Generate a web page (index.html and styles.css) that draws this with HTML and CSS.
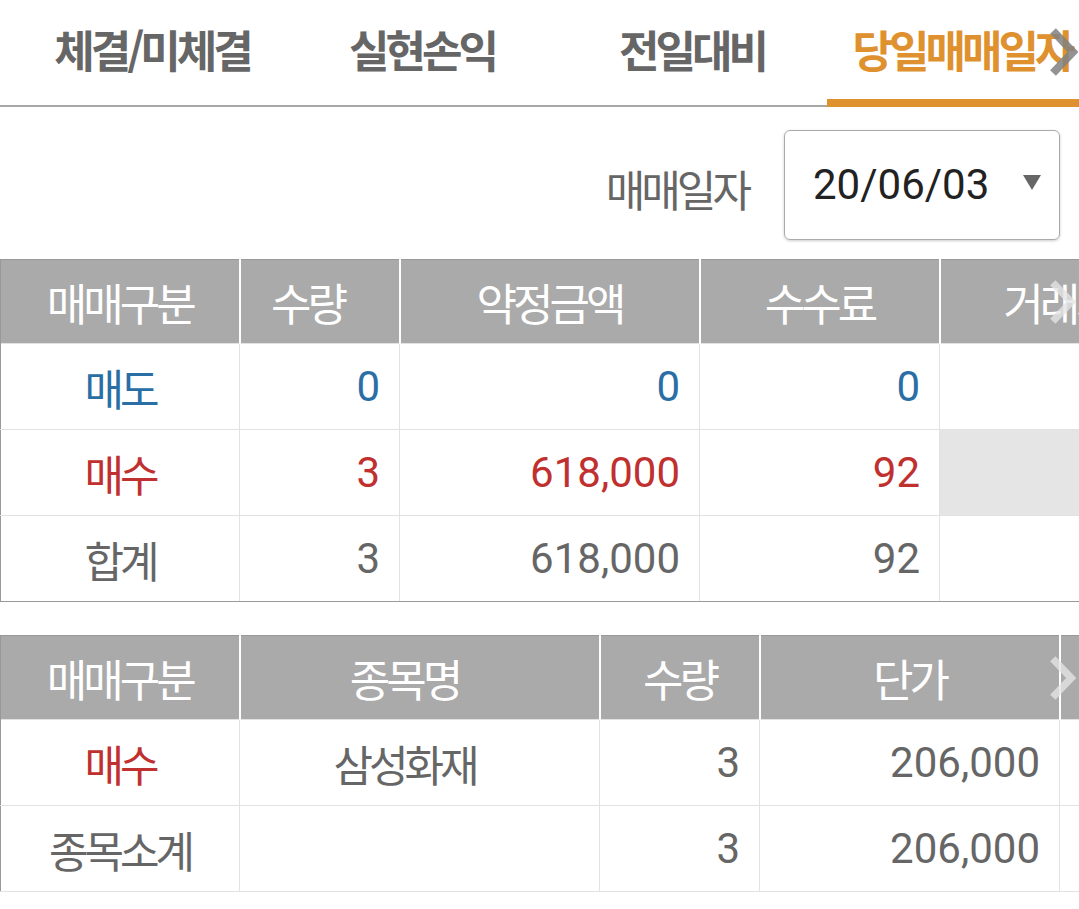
FILE: index.html
```html
<!DOCTYPE html>
<html lang="ko">

<head>
    <meta charset="UTF-8" />
    <title>당일매매일지</title>
    <link rel="stylesheet" href="styles.css">
</head>

<body>
    <!-- 상단 탭 -->
    <div class="tab-bar">
        <ul class="tabs">
            <li class="tab">체결/미체결</li>
            <li class="tab">실현손익</li>
            <li class="tab">전일대비</li>
            <li class="tab active">당일매매일자</li>
        </ul>
        <svg class="more more-tab" viewBox="0 0 30 50" width="30" height="50">
            <path d="M5 4 L25 25 L5 46" />
        </svg>
    </div>

    <!-- 매매일자 선택 -->
    <div class="date-row">
        <span class="date-label">매매일자</span>
        <div class="select">
            <span class="select-value">20/06/03</span>
            <span class="select-arrow"></span>
        </div>
    </div>

    <!-- 매매구분 합계 -->
    <div class="grid-wrap">
        <table class="grid grid-sum">
            <colgroup>
                <col style="width: 239px">
                <col style="width: 160px">
                <col style="width: 300px">
                <col style="width: 240px">
                <col style="width: 236px">
            </colgroup>
            <thead>
                <tr>
                    <th>매매구분</th>
                    <th class="shift">수량</th>
                    <th>약정금액</th>
                    <th>수수료</th>
                    <th>거래세</th>
                </tr>
            </thead>
            <tbody>
                <tr class="sell">
                    <td class="kind">매도</td>
                    <td class="num">0</td>
                    <td class="num">0</td>
                    <td class="num">0</td>
                    <td class="num"></td>
                </tr>
                <tr class="buy">
                    <td class="kind">매수</td>
                    <td class="num">3</td>
                    <td class="num">618,000</td>
                    <td class="num">92</td>
                    <td class="num on"></td>
                </tr>
                <tr>
                    <td class="kind">합계</td>
                    <td class="num">3</td>
                    <td class="num">618,000</td>
                    <td class="num">92</td>
                    <td class="num"></td>
                </tr>
            </tbody>
        </table>
        <svg class="more more-head" viewBox="0 0 30 50" width="30" height="46">
            <path d="M5 4 L25 25 L5 46" />
        </svg>
    </div>

    <!-- 종목별 내역 -->
    <div class="grid-wrap grid-wrap-detail">
        <table class="grid grid-detail">
            <colgroup>
                <col style="width: 239px">
                <col style="width: 360px">
                <col style="width: 160px">
                <col style="width: 300px">
                <col style="width: 240px">
            </colgroup>
            <thead>
                <tr>
                    <th>매매구분</th>
                    <th class="name">종목명</th>
                    <th>수량</th>
                    <th>단가</th>
                    <th>금액</th>
                </tr>
            </thead>
            <tbody>
                <tr class="buy">
                    <td class="kind">매수</td>
                    <td class="name">삼성화재</td>
                    <td class="num">3</td>
                    <td class="num">206,000</td>
                    <td class="num"></td>
                </tr>
                <tr>
                    <td class="kind">종목소계</td>
                    <td class="name"></td>
                    <td class="num">3</td>
                    <td class="num">206,000</td>
                    <td class="num"></td>
                </tr>
            </tbody>
        </table>
        <svg class="more more-head" viewBox="0 0 30 50" width="30" height="46">
            <path d="M5 4 L25 25 L5 46" />
        </svg>
    </div>
</body>

</html>
```

FILE: styles.css
```css
* {
    margin: 0;
    padding: 0;
    box-sizing: border-box;
}

ul {
    list-style: none;
}

body {
    width: 1079px;
    overflow: hidden;
    background: #fff;
    font-family: "Noto Sans CJK KR", "Noto Sans", sans-serif;
    color: #666;
}

/* 탭 */
.tab-bar {
    position: relative;
    overflow: hidden;
}

.tabs {
    display: flex;
    height: 107px;
    padding-left: 17px;
    border-bottom: 2px solid #a8a8a8;
}

.tab {
    flex: 0 0 270px;
    height: 107px;
    margin-bottom: -2px;
    border-bottom: 8px solid transparent;
    font-size: 44px;
    font-weight: 700;
    line-height: 99px;
    letter-spacing: -4px;
    text-align: center;
    white-space: nowrap;
    color: #666;
}

.tab.active {
    color: #e0912f;
    border-bottom-color: #e0912f;
}

.more {
    position: absolute;
    fill: none;
    stroke-width: 8;
}

.more-tab {
    top: 27px;
    right: 1px;
    stroke: rgba(128, 128, 128, 0.85);
}

.more-head {
    top: 20px;
    right: 2px;
    stroke: rgba(228, 228, 228, 0.8);
}

/* 매매일자 */
.date-row {
    display: flex;
    align-items: center;
    justify-content: flex-end;
    gap: 36px;
    height: 152px;
    padding: 23px 19px 19px 0;
}

.date-label {
    font-size: 43px;
    letter-spacing: -4px;
    color: #666;
    margin-top: 6px;
}

.select {
    display: flex;
    align-items: center;
    justify-content: space-between;
    width: 276px;
    height: 110px;
    padding: 0 18px 0 28px;
    border: 1px solid #aaa;
    border-radius: 6px;
    box-shadow: 0 1px 3px rgba(0, 0, 0, 0.2);
}

.select-value {
    font-family: Roboto, "Liberation Sans", sans-serif;
    font-size: 42px;
    color: #222;
    margin-top: -2px;
}

.select-arrow {
    width: 0;
    height: 0;
    border-left: 9px solid transparent;
    border-right: 9px solid transparent;
    border-top: 15px solid #666;
    margin-top: -6px;
}

/* 표 */
.grid-wrap {
    position: relative;
    overflow: hidden;
}

.grid-wrap-detail {
    margin-top: 33px;
}

.grid {
    table-layout: fixed;
    border-collapse: collapse;
    width: 1175px;
}

.grid-detail {
    width: 1299px;
}

.grid th {
    height: 84px;
    background: #aaa;
    color: #fff;
    font-size: 44px;
    font-weight: 400;
    letter-spacing: -4px;
    border-left: 2px solid #fff;
    border-top: 1px solid #999;
    white-space: nowrap;
    overflow: hidden;
}

.grid th:first-child {
    border-left: 1px solid #999;
}

.grid th.shift {
    padding-right: 24px;
}

.grid td {
    height: 86px;
    border: 1px solid #e2e2e2;
    color: #666;
    white-space: nowrap;
}

.grid td:first-child {
    border-left: 1px solid #999;
}

.grid-sum tbody tr:last-child td {
    border-bottom: 1px solid #999;
}

.grid td.kind,
.grid td.name {
    text-align: center;
    font-size: 43px;
    letter-spacing: -4px;
}

.grid .name {
    padding-right: 30px;
}

.grid .num {
    text-align: right;
    padding-right: 19px;
    font-family: Roboto, "Liberation Sans", sans-serif;
    font-size: 42px;
}

.grid .on {
    background: #e5e5e5;
}

.grid .sell td:nth-child(-n+4) {
    color: #2a6ea6;
}

.grid-sum .buy td:nth-child(-n+4),
.grid-detail .buy .kind {
    color: #c0302f;
}
```
